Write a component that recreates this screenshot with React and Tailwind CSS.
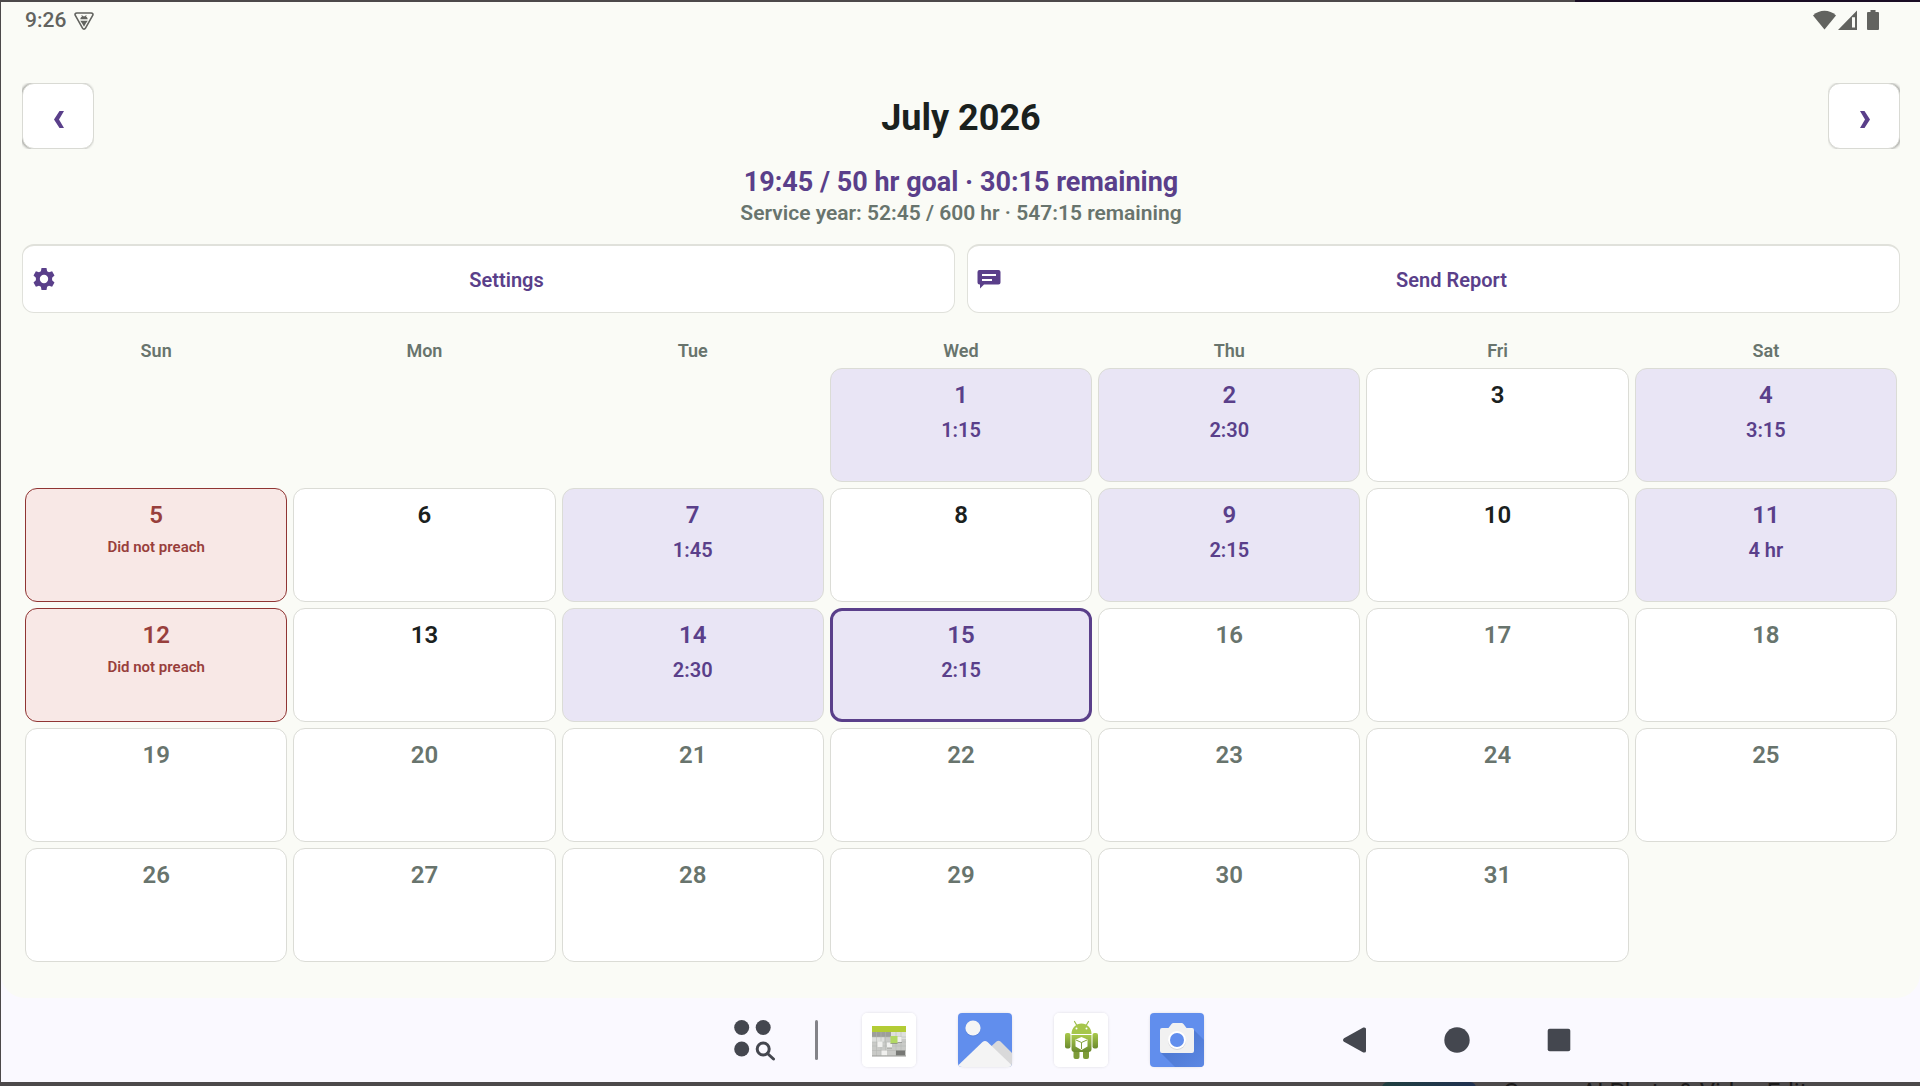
import React from 'react';

const WEEKDAYS = ['Sun', 'Mon', 'Tue', 'Wed', 'Thu', 'Fri', 'Sat'];
const FIRST_WEEKDAY = 3;
const DAYS_IN_MONTH = 31;
const TODAY = 15;

const ENTRIES = {
  1: '1:15',
  2: '2:30',
  4: '3:15',
  5: 'skipped',
  7: '1:45',
  9: '2:15',
  11: '4 hr',
  12: 'skipped',
  14: '2:30',
  15: '2:15',
};

function StatusBar() {
  return (
    <div className="flex items-center justify-between pl-6 pr-[41px] h-9 text-[#62635f]">
      <div className="flex items-center gap-2">
        <span className="text-[21px] leading-6 font-medium">9:26</span>
        <svg className="w-5 h-[18px] mt-0.5" viewBox="0 0 20 18" fill="none">
          <path d="M2.8 1h14.4c1.4 0 2.2 1.2 1.5 2.4l-7.2 12.8c-.7 1.2-2.3 1.2-3 0L1.3 3.4C.6 2.200 1.400 1 2.800 1z" stroke="currentColor" strokeWidth="1.600" />
          <path d="M6.300 7.300c.2-1.500.8-2.300 1.700-2.800L7.300 3.300h.9l.7.900h2.200l.7-.9h.9l-.7 1.200c.9.500 1.500 1.300 1.700 2.800zM6.200 8.700h7.600l-2.200 3H8.400zM8.300 11.700h3.400L10 14.800z" fill="currentColor" />
        </svg>
      </div>
      <div className="flex items-center">
        <svg className="w-[23px] h-5" viewBox="0 0 23 20" fill="currentColor">
          <path d="M0 5.500C6.500-.7 16.500-.7 23 5.500L11.500 19.500z" />
        </svg>
        <svg className="w-[19px] h-5 ml-0.5" viewBox="0 0 19 20" fill="currentColor">
          <path fillRule="evenodd" d="M19 .5V20H0zM14 7.200V17.500h3V7.200z" />
        </svg>
        <svg className="w-3 h-5 ml-2.5" viewBox="0 0 12 20" fill="currentColor">
          <path d="M3.500 0h5v2H11a1 1 0 0 1 1 1v16a1 1 0 0 1-1 1H1a1 1 0 0 1-1-1V3a1 1 0 0 1 1-1h2.500z" />
        </svg>
      </div>
    </div>
  );
}

function MonthButton({ label, shadow, children }) {
  return (
    <div className="overflow-hidden">
      <button
        type="button"
        aria-label={label}
        className={`flex items-center justify-center w-[72px] h-[66px] pl-0.5 pt-1.5 bg-white border border-[#d9dad4] rounded-xl text-[#5a3f8a] ${shadow}`}
      >
        {children}
      </button>
    </div>
  );
}

function ActionButton({ icon, children }) {
  return (
    <button
      type="button"
      className="flex-1 flex items-center gap-3 h-[69px] px-[9px] bg-white border border-t-2 border-[#e0e1db] rounded-xl text-[#5a3f8a]"
    >
      {icon}
      <span className="flex-1 pt-0.5 text-[20px] leading-6 font-semibold">{children}</span>
    </button>
  );
}

function DayCell({ day }) {
  const entry = ENTRIES[day];
  const skipped = entry === 'skipped';

  let tone = 'bg-white border-[#dbdcd6] border text-[#1a211e]';
  if (day > TODAY) tone = 'bg-white border-[#dbdcd6] border text-[#68746d]';
  if (entry) tone = 'bg-[#e9e5f5] border-[#dbdcd6] border text-[#5a3f8a]';
  if (skipped) tone = 'bg-[#f8e8e6] border-[#903533] border text-[#983f3c]';
  if (day === TODAY) tone = 'bg-[#e9e5f5] border-[#5a3f8a] border-3 text-[#5a3f8a]';

  return (
    <button type="button" className={`flex flex-col items-center justify-start h-[114px] rounded-xl ${tone}`}>
      <span className={`text-[24px] leading-7 font-semibold ${day === TODAY ? 'mt-2.5' : 'mt-3'}`}>{day}</span>
      {entry && !skipped && <span className="mt-[9px] text-[20px] leading-6 font-semibold">{entry}</span>}
      {skipped && <span className="mt-[9px] text-[15px] leading-[18px] font-semibold">Did not preach</span>}
    </button>
  );
}

function Calendar() {
  const days = Array.from({ length: DAYS_IN_MONTH }, (_, i) => i + 1);
  return (
    <section className="px-[3px] mt-[26px]">
      <div className="grid grid-cols-7 gap-1.5">
        {WEEKDAYS.map((name) => (
          <div key={name} className="h-[29px] text-center text-[18px] leading-6 font-semibold text-[#68746d]">
            {name}
          </div>
        ))}
      </div>
      <div className="grid grid-cols-7 gap-1.5">
        {Array.from({ length: FIRST_WEEKDAY }, (_, i) => (
          <div key={`blank-${i}`} />
        ))}
        {days.map((day) => (
          <DayCell key={day} day={day} />
        ))}
      </div>
    </section>
  );
}

function CalendarAppIcon() {
  return (
    <svg className="w-[54px] h-[54px]" viewBox="0 0 54 54">
      <rect width="54" height="54" rx="5" fill="#fff" />
      <rect x="10" y="13" width="34" height="30" fill="#c9cac7" />
      <rect x="10" y="13" width="34" height="6" fill="#b3cc35" />
      <path d="M10 19h19v5H10z" fill="#9d9e9b" />
      <path d="M29 19h15v7H29zM10 24h12v5H10z" fill="#dedfdd" />
      <path d="M10 24h34M10 29h34M10 33h34M10 37.500h34M14.500 19v24M19 19v24M23.500 19v24M34 19v24M39 19v24" stroke="#b3b4b1" strokeWidth=".5" />
      <path d="M34 37.500h9v5h-9z" fill="#777875" />
      <path d="M15.500 28.500h5v5.500h-5zM25 29.500h5v5.500h-5zM35 24h4.500v5.500H35zM19.500 37.500H25v5h-5.500z" fill="#f0f0ee" />
      <path d="M28.500 23h7v7.500h-7z" fill="#b2d864" />
      <path d="M28.500 30.500h7M25 35h5M35.500 29.500H40" stroke="#858683" strokeWidth=".7" />
      <path d="M10 43h34" stroke="#999a97" />
    </svg>
  );
}

function GalleryAppIcon() {
  return (
    <svg className="w-[54px] h-[54px]" viewBox="0 0 54 54">
      <defs>
        <clipPath id="galleryClip">
          <rect width="54" height="54" rx="4" />
        </clipPath>
      </defs>
      <g clipPath="url(#galleryClip)">
        <rect width="54" height="54" fill="#618eed" />
        <path d="M27 39 38.500 28.500q2-1.500 4 0L54 40v14H39z" fill="#d9d9da" />
        <path d="M0 54v-1.500L24.500 29q2.500-2 5 0L54 52.500V54z" fill="#f4f4f4" />
        <circle cx="15" cy="16" r="7.600" fill="#4d77ce" opacity=".5" />
        <circle cx="15" cy="15" r="7.600" fill="#f5f5f5" />
      </g>
    </svg>
  );
}

function AndroidAppIcon() {
  return (
    <svg className="w-[54px] h-[54px]" viewBox="0 0 54 54">
      <defs>
        <linearGradient id="droidGreen" x1="0" y1="0" x2="0" y2="1">
          <stop offset="0" stopColor="#a9c94b" />
          <stop offset="1" stopColor="#6b8a2e" />
        </linearGradient>
      </defs>
      <rect width="54" height="54" rx="5" fill="#fff" />
      <path d="M20.500 8.500l3 5M34.500 8.500l-3 5" stroke="#9dbb4d" strokeWidth="1.200" strokeLinecap="round" />
      <path d="M17.500 21c0-6 4.500-10.500 10-10.500S37.500 15 37.500 21z" fill="#a6c64b" />
      <circle cx="22.500" cy="15.500" r="1" fill="#fff" />
      <circle cx="32.500" cy="15.500" r="1" fill="#fff" />
      <rect x="11" y="20" width="5.500" height="15.500" rx="2" fill="url(#droidGreen)" />
      <rect x="38.500" y="20" width="5.500" height="15.500" rx="2" fill="url(#droidGreen)" />
      <rect x="19.500" y="36" width="6" height="10" rx="2" fill="#7d9b38" />
      <rect x="29" y="36" width="6" height="10" rx="2" fill="#7d9b38" />
      <path d="M17.500 22h20v14q0 3-3 3h-14q-3 0-3-3z" fill="url(#droidGreen)" />
      <path d="M27.500 24l6 2.500v7l-6 3.500-6-3.500v-7z" fill="#fff" />
      <path d="M22 27l5.500 2.500L33 27M27.500 29.500V36" stroke="#829f3d" strokeWidth="1" fill="none" />
    </svg>
  );
}

function CameraAppIcon() {
  return (
    <svg className="w-[54px] h-[54px]" viewBox="0 0 54 54">
      <defs>
        <linearGradient id="cameraShade" x1="0" y1="0" x2="1" y2="1">
          <stop offset=".4" stopColor="#4f7ad4" />
          <stop offset="1" stopColor="#5c88e4" />
        </linearGradient>
      </defs>
      <rect width="54" height="54" rx="4" fill="#618eed" />
      <path d="M43 16 54 27v23q0 4-4 4H25L11 40z" fill="url(#cameraShade)" />
      <path d="M12 15h6.500l3-4q.8-1 2-1h8q1.200 0 2 1l3 4H42q2 0 2 2v21q0 2-2 2H12q-2 0-2-2V17q0-2 2-2z" fill="#f1f1f1" />
      <circle cx="27" cy="28" r="9" fill="#d5d6d9" />
      <circle cx="27" cy="27" r="9" fill="#fff" />
      <circle cx="27" cy="27" r="7" fill="#618eed" />
    </svg>
  );
}

const DOCK_APPS = [
  { name: 'Calendar', icon: <CalendarAppIcon /> },
  { name: 'Gallery', icon: <GalleryAppIcon /> },
  { name: 'Android', icon: <AndroidAppIcon /> },
  { name: 'Camera', icon: <CameraAppIcon /> },
];

function NavButton({ label, children }) {
  return (
    <button type="button" aria-label={label} className="flex items-center justify-center w-[102px] h-14">
      <svg className="w-[26px] h-[26px]" viewBox="0 0 26 26" fill="currentColor">
        {children}
      </svg>
    </button>
  );
}

function Taskbar() {
  return (
    <nav className="grid grid-cols-[1fr_auto_1fr] items-center h-[84px] text-[#44474f]">
      <div />
      <div className="flex items-center">
        <button type="button" aria-label="All apps" className="pl-4">
          <svg className="w-[42px] h-[42px]" viewBox="0 0 42 42" fill="currentColor">
            <circle cx="7.700" cy="8.500" r="7.500" />
            <circle cx="29.200" cy="8.500" r="7.500" />
            <circle cx="7.700" cy="30" r="7.500" />
            <circle cx="29.200" cy="30" r="6" fill="none" stroke="currentColor" strokeWidth="3" />
            <path d="M33.500 34.500l6 5.500" stroke="currentColor" strokeWidth="3" strokeLinecap="round" />
          </svg>
        </button>
        <div className="w-[3px] h-10 ml-[39px] mr-11 rounded-full bg-[#838389]" />
        <div className="flex gap-[42px]">
          {DOCK_APPS.map((app) => (
            <button key={app.name} type="button" aria-label={app.name} className="rounded-md shadow-[0_0_3px_rgba(0,0,0,0.12)]">
              {app.icon}
            </button>
          ))}
        </div>
      </div>
      <div className="flex items-center pl-[100px]">
        <NavButton label="Back">
          <path d="M2 11.200 21.300.6Q24 0 24 2v22q0 2-2.700 1.400L2 14.800Q0 13 2 11.200z" />
        </NavButton>
        <NavButton label="Home">
          <circle cx="13" cy="13" r="12.700" />
        </NavButton>
        <NavButton label="Recent apps">
          <rect x="1.700" y="1.700" width="22.600" height="22.600" rx="2" />
        </NavButton>
      </div>
    </nav>
  );
}

function App() {
  return (
    <div className="min-h-screen flex flex-col bg-[#4c494a] pl-px font-[Roboto,sans-serif]">
      {/* Edge of the window behind */}
      <div className="flex h-0.5">
        <div className="w-[82%]" />
        <div className="flex-1 bg-[#190d24]" />
      </div>

      <div className="flex-1 flex flex-col bg-[#faf9ff]">
        <div className="flex-1 bg-[#fafbf6] rounded-b-3xl pb-9">
          <StatusBar />

          <main className="pl-[21px] pr-5 pt-[45px]">
            <header className="flex items-center justify-between">
              <MonthButton label="Previous month" shadow="shadow-[-1px_0_3px_rgba(0,0,0,0.4)]">
                <svg className="w-[10px] h-[17px]" viewBox="0 0 10 17" fill="currentColor">
                  <path d="M5.500 0H10L5 8.500 10 17H5.500L0 8.500z" />
                </svg>
              </MonthButton>
              <h1 className="pt-1 text-[36px] leading-[42px] font-bold text-[#1a211e]">July 2026</h1>
              <MonthButton label="Next month" shadow="shadow-[1px_0_3px_rgba(0,0,0,0.4)]">
                <svg className="w-[10px] h-[17px]" viewBox="0 0 10 17" fill="currentColor">
                  <path d="M4.500 0H0L5 8.500 0 17H4.500L10 8.500z" />
                </svg>
              </MonthButton>
            </header>

            <p className="mt-[17px] text-center text-[27px] leading-8 font-bold text-[#5a3f8a]">
              19:45 / 50 hr goal · 30:15 remaining
            </p>
            <p className="mt-[3px] text-center text-[21px] leading-6 font-semibold text-[#68746d]">
              Service year: 52:45 / 600 hr · 547:15 remaining
            </p>

            <div className="flex gap-3 mt-[19px]">
              <ActionButton
                icon={
                  <svg className="w-6 h-6" viewBox="0 0 24 24" fill="currentColor">
                    <path fillRule="evenodd" d="M9.500 1h5l.6 3.200 1.900 1.100 3.100-1 2.400 4.200-2.400 2.200v2.600l2.400 2.200-2.400 4.200-3.100-1-1.900 1.100-.6 3.200h-5l-.6-3.200L7 18.700l-3.100 1-2.400-4.200 2.400-2.200v-2.600L1.500 8.500l2.400-4.200 3.100 1 1.900-1.100zM12 7.800a4.200 4.200 0 1 0 0 8.400 4.200 4.200 0 0 0 0-8.400z" />
                  </svg>
                }
              >
                Settings
              </ActionButton>
              <ActionButton
                icon={
                  <svg className="w-6 h-6" viewBox="0 0 24 24" fill="currentColor">
                    <path fillRule="evenodd" d="M2.500 3h19Q23.500 3 23.500 5v10.500q0 2-2 2H7L3 21.500V17.500h-.5q-2 0-2-2V5q0-2 2-2zM5 7v2h14V7zM5 12v2h10v-2z" />
                  </svg>
                }
              >
                Send Report
              </ActionButton>
            </div>

            <Calendar />
          </main>
        </div>

        <Taskbar />
      </div>

      {/* Top of the list item peeking out below */}
      <div className="flex items-start justify-end gap-[27px] h-1 pr-[91px] overflow-hidden">
        <div className="w-[94px] h-5 rounded-t-md bg-linear-to-r from-[#203f40] to-[#1f3050]" />
        <span className="text-[24px] leading-5 text-[#1b1a1a] whitespace-nowrap">Canva: AI Photo &amp; Video Editor</span>
      </div>
    </div>
  );
}

export default App;
